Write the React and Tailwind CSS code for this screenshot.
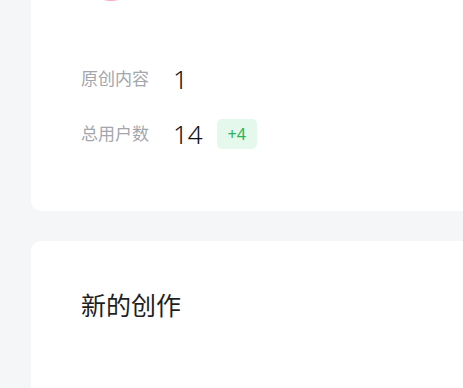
export default function App() {
    const stats = [
        { label: '原创内容', value: '1' },
        { label: '总用户数', value: '14', delta: '+4' },
    ];

    return (
        <div
            className="min-h-screen bg-[#f5f6f8] pl-[31px] overflow-hidden"
            style={{ fontFamily: '"Noto Sans", "Noto Sans CJK SC", sans-serif' }}
        >
            {/* profile card, scrolled so only its lower half shows */}
            <div className="-mt-[100px] -mr-[40px] bg-white rounded-[10px] pt-[41px] pl-[50px] pb-[62px]">
                <div className="h-[60px] w-[60px] rounded-full bg-[#f7a8c4]" />
                <div className="mt-[63px] flex flex-col gap-[25px]">
                    {stats.map((s) => (
                        <div key={s.label} className="flex items-center h-[30px]">
                            <span className="w-[92px] text-[17px] text-[#a3a6ad]">{s.label}</span>
                            <span className="text-[26px] font-light text-[#111] leading-none">
                                {s.value}
                            </span>
                            {s.delta && (
                                <span className="ml-[14px] h-[30px] w-[40px] flex items-center justify-center rounded-[5px] bg-[#e5f8ec] text-[16px] text-[#22b55a]">
                                    {s.delta}
                                </span>
                            )}
                        </div>
                    ))}
                </div>
            </div>

            <div className="mt-[30px] -mr-[40px] bg-white rounded-[10px] pt-[48px] pl-[50px] h-[300px]">
                <h2 className="text-[25px] leading-[32px] text-[#1f1f1f]">新的创作</h2>
            </div>
        </div>
    );
}
